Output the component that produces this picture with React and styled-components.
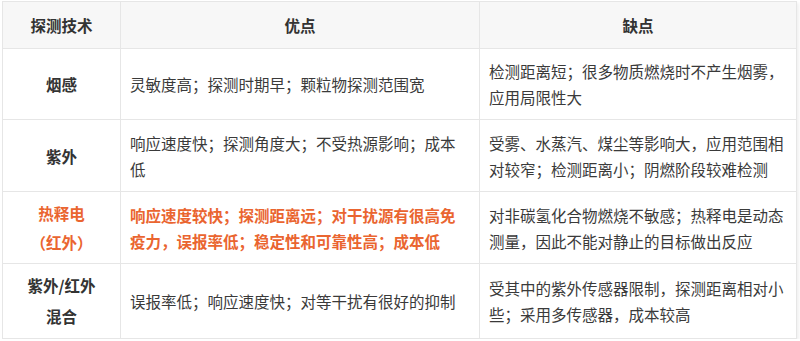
import React from 'react';
import styled, { createGlobalStyle } from 'styled-components';

const GlobalStyle = createGlobalStyle`
  html, body {
    margin: 0;
    padding: 0;
    background: #ffffff;
  }
  body {
    font-family: "Noto Sans CJK SC", "Noto Sans", sans-serif;
    color: #333333;
  }
`;

const Wrapper = styled.div`
  padding: 1px 0 0 2px;
`;

const Table = styled.table`
  width: 794px;
  table-layout: fixed;
  border-collapse: collapse;
  box-shadow: 2px 2px 3px rgba(0, 0, 0, 0.06);
  font-size: 15.5px;
  line-height: 26px;
`;

const Row = styled.tr`
  height: ${({ $h }) => $h}px;
`;

const HeadCell = styled.th`
  background: #f7f7f7;
  border: 1px solid #e6e6e6;
  font-weight: 700;
  color: #333333;
  text-align: center;
  vertical-align: middle;
  padding: 0 9px;
`;

const NameCell = styled.td`
  border: 1px solid #e6e6e6;
  font-weight: 700;
  text-align: center;
  vertical-align: middle;
  padding: 0 9px;
  line-height: ${({ $lh }) => $lh || 26}px;
  color: ${({ $hot }) => ($hot ? '#ea6530' : '#333333')};
`;

const TextCell = styled.td`
  border: 1px solid #e6e6e6;
  text-align: left;
  vertical-align: middle;
  padding: 0 9px;
  font-weight: ${({ $hot }) => ($hot ? 700 : 400)};
  color: ${({ $hot }) => ($hot ? '#ea6530' : '#3a3a3a')};
`;

const rows = [
  {
    name: ['烟感'],
    pros: '灵敏度高；探测时期早；颗粒物探测范围宽',
    cons: '检测距离短；很多物质燃烧时不产生烟雾，应用局限性大',
    h: 71,
  },
  {
    name: ['紫外'],
    pros: '响应速度快；探测角度大；不受热源影响；成本低',
    cons: '受雾、水蒸汽、煤尘等影响大，应用范围相对较窄；检测距离小；阴燃阶段较难检测',
    h: 72,
  },
  {
    name: ['热释电', '（红外）'],
    pros: '响应速度较快；探测距离远；对干扰源有很高免疫力，误报率低；稳定性和可靠性高；成本低',
    cons: '对非碳氢化合物燃烧不敏感；热释电是动态测量，因此不能对静止的目标做出反应',
    hot: true,
    lh: 29,
    h: 72,
  },
  {
    name: ['紫外/红外', '混合'],
    pros: '误报率低；响应速度快；对等干扰有很好的抑制',
    cons: '受其中的紫外传感器限制，探测距离相对小些；采用多传感器，成本较高',
    lh: 31,
    h: 75,
  },
];

const App = () => (
  <Wrapper>
    <GlobalStyle />
    <Table>
      <colgroup>
        <col style={{ width: 118 }} />
        <col style={{ width: 359 }} />
        <col style={{ width: 317 }} />
      </colgroup>
      <thead>
        <Row $h={47}>
          <HeadCell>探测技术</HeadCell>
          <HeadCell>优点</HeadCell>
          <HeadCell>缺点</HeadCell>
        </Row>
      </thead>
      <tbody>
        {rows.map((r, i) => (
          <Row key={i} $h={r.h}>
            <NameCell $hot={r.hot} $lh={r.lh}>
              {r.name.map((n, j) => (
                <div key={j}>{n}</div>
              ))}
            </NameCell>
            <TextCell $hot={r.hot}>{r.pros}</TextCell>
            <TextCell>{r.cons}</TextCell>
          </Row>
        ))}
      </tbody>
    </Table>
  </Wrapper>
);

export default App;
